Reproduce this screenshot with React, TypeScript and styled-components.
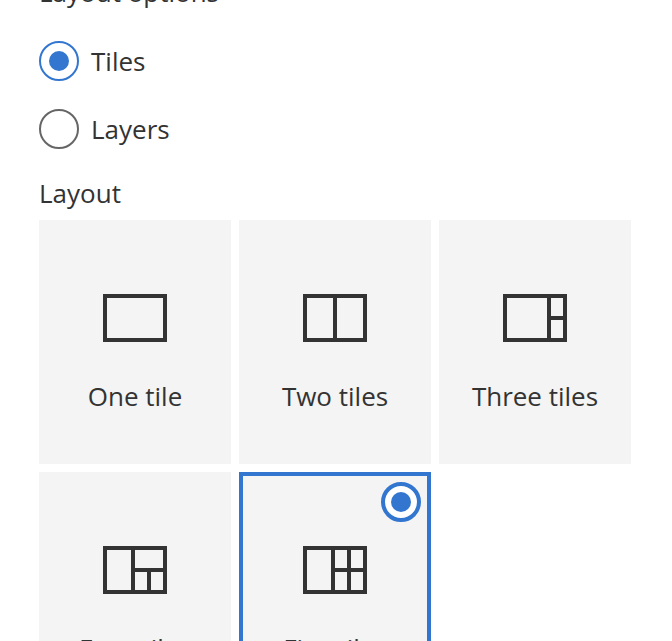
import React, { useState } from "react";
import styled, { createGlobalStyle } from "styled-components";

const blue = "#3276cf";
const ink = "#333333";

const GlobalStyle = createGlobalStyle`
  * { box-sizing: border-box; }
  html, body { margin: 0; height: 100%; }
  body {
    overflow: hidden;
    background: #ffffff;
    color: ${ink};
    font-family: "Segoe UI", "Open Sans", "Noto Sans", sans-serif;
    font-size: 26px;
    line-height: 36px;
  }
`;

/* The settings pane is scrolled slightly past its first heading. */
const Pane = styled.main`
  margin-top: -26px;
  padding: 0 41px 40px 39px;
`;

const Group = styled.fieldset`
  border: 0;
  margin: 0;
  padding: 0;
  min-width: 0;
`;

const Legend = styled.legend<{ $gap: number }>`
  display: block;
  padding: 0;
  margin-bottom: ${(p) => p.$gap}px;
`;

const OptionList = styled.div`
  display: flex;
  flex-direction: column;
  align-items: flex-start;
  gap: 28px;
  margin-bottom: 26px;
`;

const OptionRow = styled.label`
  display: flex;
  align-items: center;
  gap: 12px;
  height: 40px;
  cursor: pointer;
`;

const Radio = styled.input<{ $ring: number }>`
  appearance: none;
  flex: none;
  display: grid;
  place-items: center;
  width: 40px;
  height: 40px;
  margin: 0;
  border: ${(p) => p.$ring}px solid #666666;
  border-radius: 50%;
  background: #ffffff;
  cursor: pointer;

  &:checked {
    border-color: ${blue};
  }
  &:checked::before {
    content: "";
    width: 20px;
    height: 20px;
    border-radius: 50%;
    background: ${blue};
  }
`;

const TileGrid = styled.div`
  display: grid;
  grid-template-columns: repeat(3, 1fr);
  gap: 8px;
`;

const Tile = styled.label`
  position: relative;
  display: flex;
  flex-direction: column;
  align-items: center;
  gap: 36px;
  padding: 74px 4px 50px;
  background: #f4f4f4;
  cursor: pointer;

  &:has(input:checked) {
    box-shadow: inset 0 0 0 4px ${blue};
  }
`;

const CornerRadio = styled(Radio)`
  position: absolute;
  top: 10px;
  right: 10px;

  &:not(:checked) {
    opacity: 0;
  }
`;

const Glyph = styled.svg`
  display: block;
  width: 64px;
  height: 48px;
  fill: none;
  stroke: ${ink};
  stroke-width: 4;
`;

const layouts = [
  { name: "One tile", lines: "" },
  { name: "Two tiles", lines: "M32 2V46" },
  { name: "Three tiles", lines: "M46 2V46M46 24H62" },
  { name: "Four tiles", lines: "M30 2V46M30 24H62M46 24V46" },
  { name: "Five tiles", lines: "M30 2V46M30 24H62M46 2V46" },
];

export default function App() {
  const [mode, setMode] = useState("Tiles");
  const [layout, setLayout] = useState("Five tiles");

  return (
    <>
      <GlobalStyle />
      <Pane>
        <Group>
          <Legend $gap={31}>Layout options</Legend>
          <OptionList>
            {["Tiles", "Layers"].map((name) => (
              <OptionRow key={name}>
                <Radio
                  $ring={2}
                  type="radio"
                  name="mode"
                  checked={mode === name}
                  onChange={() => setMode(name)}
                />
                <span>{name}</span>
              </OptionRow>
            ))}
          </OptionList>
        </Group>
        <Group>
          <Legend $gap={9}>Layout</Legend>
          <TileGrid>
            {layouts.map(({ name, lines }) => (
              <Tile key={name}>
                <CornerRadio
                  $ring={4}
                  type="radio"
                  name="layout"
                  checked={layout === name}
                  onChange={() => setLayout(name)}
                />
                <Glyph viewBox="0 0 64 48" aria-hidden="true">
                  <rect x="2" y="2" width="60" height="44" />
                  {lines && <path d={lines} />}
                </Glyph>
                <span>{name}</span>
              </Tile>
            ))}
          </TileGrid>
        </Group>
      </Pane>
    </>
  );
}
